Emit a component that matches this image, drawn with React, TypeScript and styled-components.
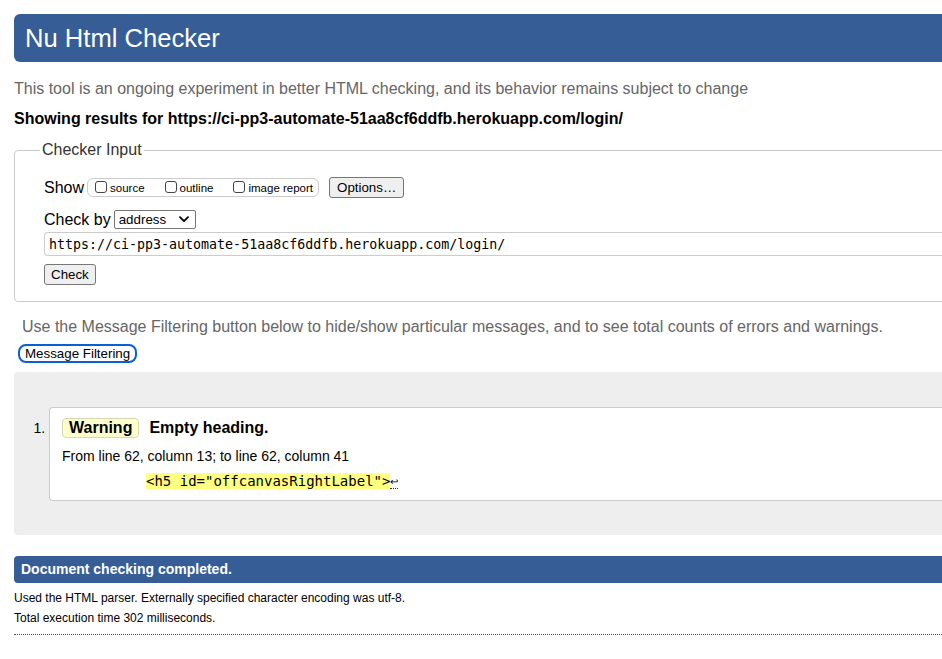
import { createGlobalStyle, styled } from 'styled-components';

const GlobalStyle = createGlobalStyle`
  html, body {
    margin: 0;
    padding: 0;
    overflow: hidden;
    background: #ffffff;
  }
  body {
    font-family: 'Liberation Sans', Arial, sans-serif;
    color: #000000;
  }
`;

const CHECKER_URL = 'https://ci-pp3-automate-51aa8cf6ddfb.herokuapp.com/login/';

const Page = styled.div`
  box-sizing: border-box;
  width: 980px;
  padding: 14px 0 0 14px;
`;

const Title = styled.h1`
  margin: 0;
  height: 48px;
  padding: 0 11px;
  line-height: 48px;
  font-size: 25.6px;
  font-weight: normal;
  color: #ffffff;
  background: #365d95;
  border-radius: 6px;
`;

const Intro = styled.p<{ $top: number; $strong?: boolean }>`
  margin: ${(p) => p.$top}px 0 0;
  font-size: 16px;
  line-height: 18px;
  color: ${(p) => (p.$strong ? '#000000' : '#666666')};
  font-weight: ${(p) => (p.$strong ? 'bold' : 'normal')};
`;

const Fieldset = styled.fieldset`
  margin: 13px 0 0;
  padding: 18px 0 16px 29px;
  border: 1px solid #cccccc;
  border-radius: 4px;
  min-width: 0;
`;

const Legend = styled.legend`
  margin-left: -4px;
  padding: 0 2px;
  font-size: 16px;
  line-height: 18px;
  color: #333333;
`;

const Row = styled.div<{ $top?: number }>`
  display: flex;
  align-items: center;
  margin-top: ${(p) => p.$top ?? 0}px;
  font-size: 16px;
`;

const Label = styled.span`
  margin-right: 3px;
`;

const ShowGroup = styled.div`
  display: flex;
  align-items: center;
  height: 17px;
  padding: 0 5px 0 7px;
  border: 1px solid #cccccc;
  border-radius: 6px;
  margin-right: 10px;
`;

const CheckOption = styled.label<{ $gap: number }>`
  display: flex;
  align-items: center;
  font-size: 11.5px;
  margin-right: ${(p) => p.$gap}px;
  color: #000000;
`;

const Box = styled.input`
  appearance: none;
  box-sizing: border-box;
  width: 12px;
  height: 12px;
  margin: 0 3px 2px 0;
  border: 1px solid #444444;
  border-radius: 3px;
  background: #ffffff;
`;

const Button = styled.button`
  box-sizing: border-box;
  height: 21px;
  padding: 0 7px;
  font-family: 'Liberation Sans', Arial, sans-serif;
  font-size: 13.33px;
  color: #000000;
  background: #efefef;
  border: 1px solid #767676;
  border-radius: 3px;
`;

const SelectWrap = styled.span`
  position: relative;
  display: inline-flex;
`;

const Select = styled.select`
  appearance: none;
  box-sizing: border-box;
  width: 82px;
  height: 19px;
  padding: 0 0 0 4px;
  font-family: 'Liberation Sans', Arial, sans-serif;
  font-size: 13.33px;
  color: #000000;
  background: #ffffff;
  border: 1px solid #767676;
  border-radius: 2px;
`;

const Chevron = styled.svg`
  position: absolute;
  right: 7px;
  top: 6px;
  pointer-events: none;
`;

const UrlInput = styled.input`
  box-sizing: border-box;
  display: block;
  width: 100%;
  height: 24px;
  margin-top: 3px;
  padding: 0 4px;
  font-family: 'DejaVu Sans Mono', 'Liberation Mono', monospace;
  font-size: 13.3px;
  color: #000000;
  border: 1px solid #cccccc;
  border-right: none;
  border-radius: 4px 0 0 4px;
  outline: none;
`;

const CheckButton = styled(Button)`
  display: block;
  margin-top: 8px;
  padding: 0 6px;
`;

const Hint = styled.p`
  margin: 16px 0 0;
  padding-left: 8px;
  font-size: 16px;
  line-height: 18px;
  color: #666666;
`;

const FilterButton = styled.button`
  box-sizing: border-box;
  display: block;
  height: 19px;
  margin: 8px 0 0 4px;
  padding: 0 5px;
  font-family: 'Liberation Sans', Arial, sans-serif;
  font-size: 13.33px;
  line-height: 15px;
  color: #000000;
  background: #ffffff;
  border: 2px solid #0a5fd6;
  border-radius: 8px;
`;

const Results = styled.div`
  margin-top: 9px;
  padding: 35px 0 34px;
  background: #eeeeee;
  border-radius: 4px;
`;

const List = styled.ol`
  margin: 0;
  padding-left: 35px;
  font-size: 14px;
`;

const Item = styled.li`
  padding: 10px 0 11px 12px;
  background: #ffffff;
  border: 1px solid #cccccc;
  border-right: none;
  border-radius: 4px 0 0 4px;
  line-height: 20px;

  &::marker {
    font-size: 14px;
  }
`;

const Heading = styled.div`
  display: flex;
  align-items: center;
  height: 20px;
  font-size: 16px;
  font-weight: bold;
`;

const Badge = styled.strong`
  box-sizing: border-box;
  height: 20px;
  line-height: 18px;
  padding: 0 6px;
  margin-right: 10px;
  background: #ffffcc;
  border: 1px solid #d8d8b0;
  border-radius: 4px;
`;

const Location = styled.p`
  margin: 10px 0 0;
  font-size: 14px;
  line-height: 17px;
`;

const Extract = styled.p`
  display: flex;
  align-items: flex-start;
  margin: 8px 0 0;
  padding-left: 84px;
  line-height: 16px;
`;

const Code = styled.code`
  font-family: 'DejaVu Sans Mono', 'Liberation Mono', monospace;
  font-size: 14px;
  line-height: 16px;
  background: #ffff80;
`;

const LineBreak = styled.span`
  font-size: 10px;
  line-height: 13px;
  margin-top: 2px;
  border-bottom: 1px dotted #333333;
`;

const DoneBar = styled.h2`
  margin: 21px 0 0;
  height: 27px;
  padding: 0 7px;
  line-height: 27px;
  font-size: 14px;
  font-weight: bold;
  color: #ffffff;
  background: #365d95;
  border-radius: 4px;
`;

const Note = styled.p<{ $top: number }>`
  margin: ${(p) => p.$top}px 0 0;
  font-size: 12px;
  line-height: 14px;
`;

const Rule = styled.hr`
  margin: 9px 0 0;
  border: none;
  border-top: 1px dotted #555555;
`;

const App = () => {
  return (
    <>
      <GlobalStyle />
      <Page>
        <Title>Nu Html Checker</Title>
        <Intro $top={18}>
          This tool is an ongoing experiment in better HTML checking, and its
          behavior remains subject to change
        </Intro>
        <Intro $top={12} $strong>
          Showing results for {CHECKER_URL}
        </Intro>

        <Fieldset>
          <Legend>Checker Input</Legend>
          <Row>
            <Label>Show</Label>
            <ShowGroup>
              <CheckOption $gap={20}>
                <Box type="checkbox" />
                source
              </CheckOption>
              <CheckOption $gap={20}>
                <Box type="checkbox" />
                outline
              </CheckOption>
              <CheckOption $gap={0}>
                <Box type="checkbox" />
                image report
              </CheckOption>
            </ShowGroup>
            <Button type="button">Options…</Button>
          </Row>
          <Row $top={12}>
            <Label>Check by</Label>
            <SelectWrap>
              <Select defaultValue="address">
                <option value="address">address</option>
                <option value="file">file upload</option>
                <option value="text">text input</option>
              </Select>
              <Chevron width="10" height="7" viewBox="0 0 10 7">
                <path
                  d="M1 1.2 L5 5.2 L9 1.2"
                  fill="none"
                  stroke="#000"
                  strokeWidth="1.8"
                  strokeLinecap="round"
                  strokeLinejoin="round"
                />
              </Chevron>
            </SelectWrap>
          </Row>
          <UrlInput type="url" defaultValue={CHECKER_URL} />
          <CheckButton type="button">Check</CheckButton>
        </Fieldset>

        <Hint>
          Use the Message Filtering button below to hide/show particular
          messages, and to see total counts of errors and warnings.
        </Hint>
        <FilterButton type="button">Message Filtering</FilterButton>

        <Results>
          <List>
            <Item>
              <Heading>
                <Badge>Warning</Badge>
                <span>Empty heading.</span>
              </Heading>
              <Location>From line 62, column 13; to line 62, column 41</Location>
              <Extract>
                <Code>{'<h5 id="offcanvasRightLabel">'}</Code>
                <LineBreak>↩</LineBreak>
              </Extract>
            </Item>
          </List>
        </Results>

        <DoneBar>Document checking completed.</DoneBar>
        <Note $top={8}>
          Used the HTML parser. Externally specified character encoding was
          utf-8.
        </Note>
        <Note $top={6}>Total execution time 302 milliseconds.</Note>
        <Rule />
      </Page>
    </>
  );
};

export default App;
